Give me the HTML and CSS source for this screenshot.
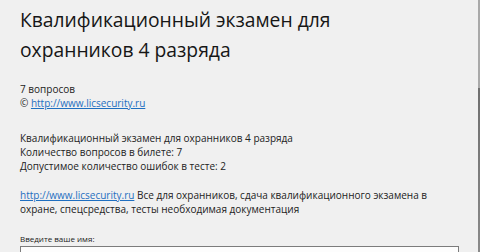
FILE: index.html
```html
<!DOCTYPE html>
<html lang="ru">
<head>
<meta charset="utf-8">
<link rel="stylesheet" href="styles.css">
</head>
<body>
<div class="window">
  <main class="content">
    <h1 class="title">Квалификационный экзамен для<br>охранников 4 разряда</h1>
    <div class="block meta">
      <div>7 вопросов</div>
      <div>© <a class="link" href="#">http://www.licsecurity.ru</a></div>
    </div>
    <div class="block info">
      <div>Квалификационный экзамен для охранников 4 разряда</div>
      <div>Количество вопросов в билете: 7</div>
      <div>Допустимое количество ошибок в тесте: 2</div>
    </div>
    <div class="block desc">
      <a class="link" href="#">http://www.licsecurity.ru</a> Все для охранников, сдача квалификационного экзамена в<br>охране, спецсредства, тесты необходимая документация
    </div>
    <div class="name-field">
      <label class="name-label">Введите ваше имя:</label>
      <div class="name-input"></div>
    </div>
  </main>
  <div class="edge"></div>
</div>
</body>
</html>
```
FILE: styles.css
```css
html, body {
  margin: 0;
  padding: 0;
  background: #f0f0f0;
}
body {
  width: 480px;
  height: 252px;
  overflow: hidden;
  font-family: "Open Sans", "Noto Sans", sans-serif;
  color: #222;
}
.window {
  display: flex;
  height: 252px;
}
.content {
  flex: 1;
  padding: 4.5px 0 0 20px;
}
.title {
  margin: 0;
  font-weight: 400;
  font-size: 19.3px;
  line-height: 30px;
  color: #161616;
  white-space: nowrap;
}
.block {
  font-size: 10px;
  line-height: 14px;
  white-space: nowrap;
}
.meta {
  margin-top: 17.5px;
}
.info {
  margin-top: 21px;
}
.desc {
  margin-top: 14.6px;
}
.link {
  color: #1f6fc0;
  text-decoration: underline;
}
.name-field {
  margin-top: 17.7px;
}
.name-label {
  display: block;
  font-size: 8px;
  line-height: 11px;
  color: #222;
}
.name-input {
  margin-top: 2px;
  width: 437px;
  height: 5px;
  border: 1px solid #7c7c7c;
  background: #fdfdfd;
}
.edge {
  width: 2px;
  background: linear-gradient(#a9a9a9, #a9a9a9 35%, #6f6f6f 35%, #8a8a8a);
}
```
